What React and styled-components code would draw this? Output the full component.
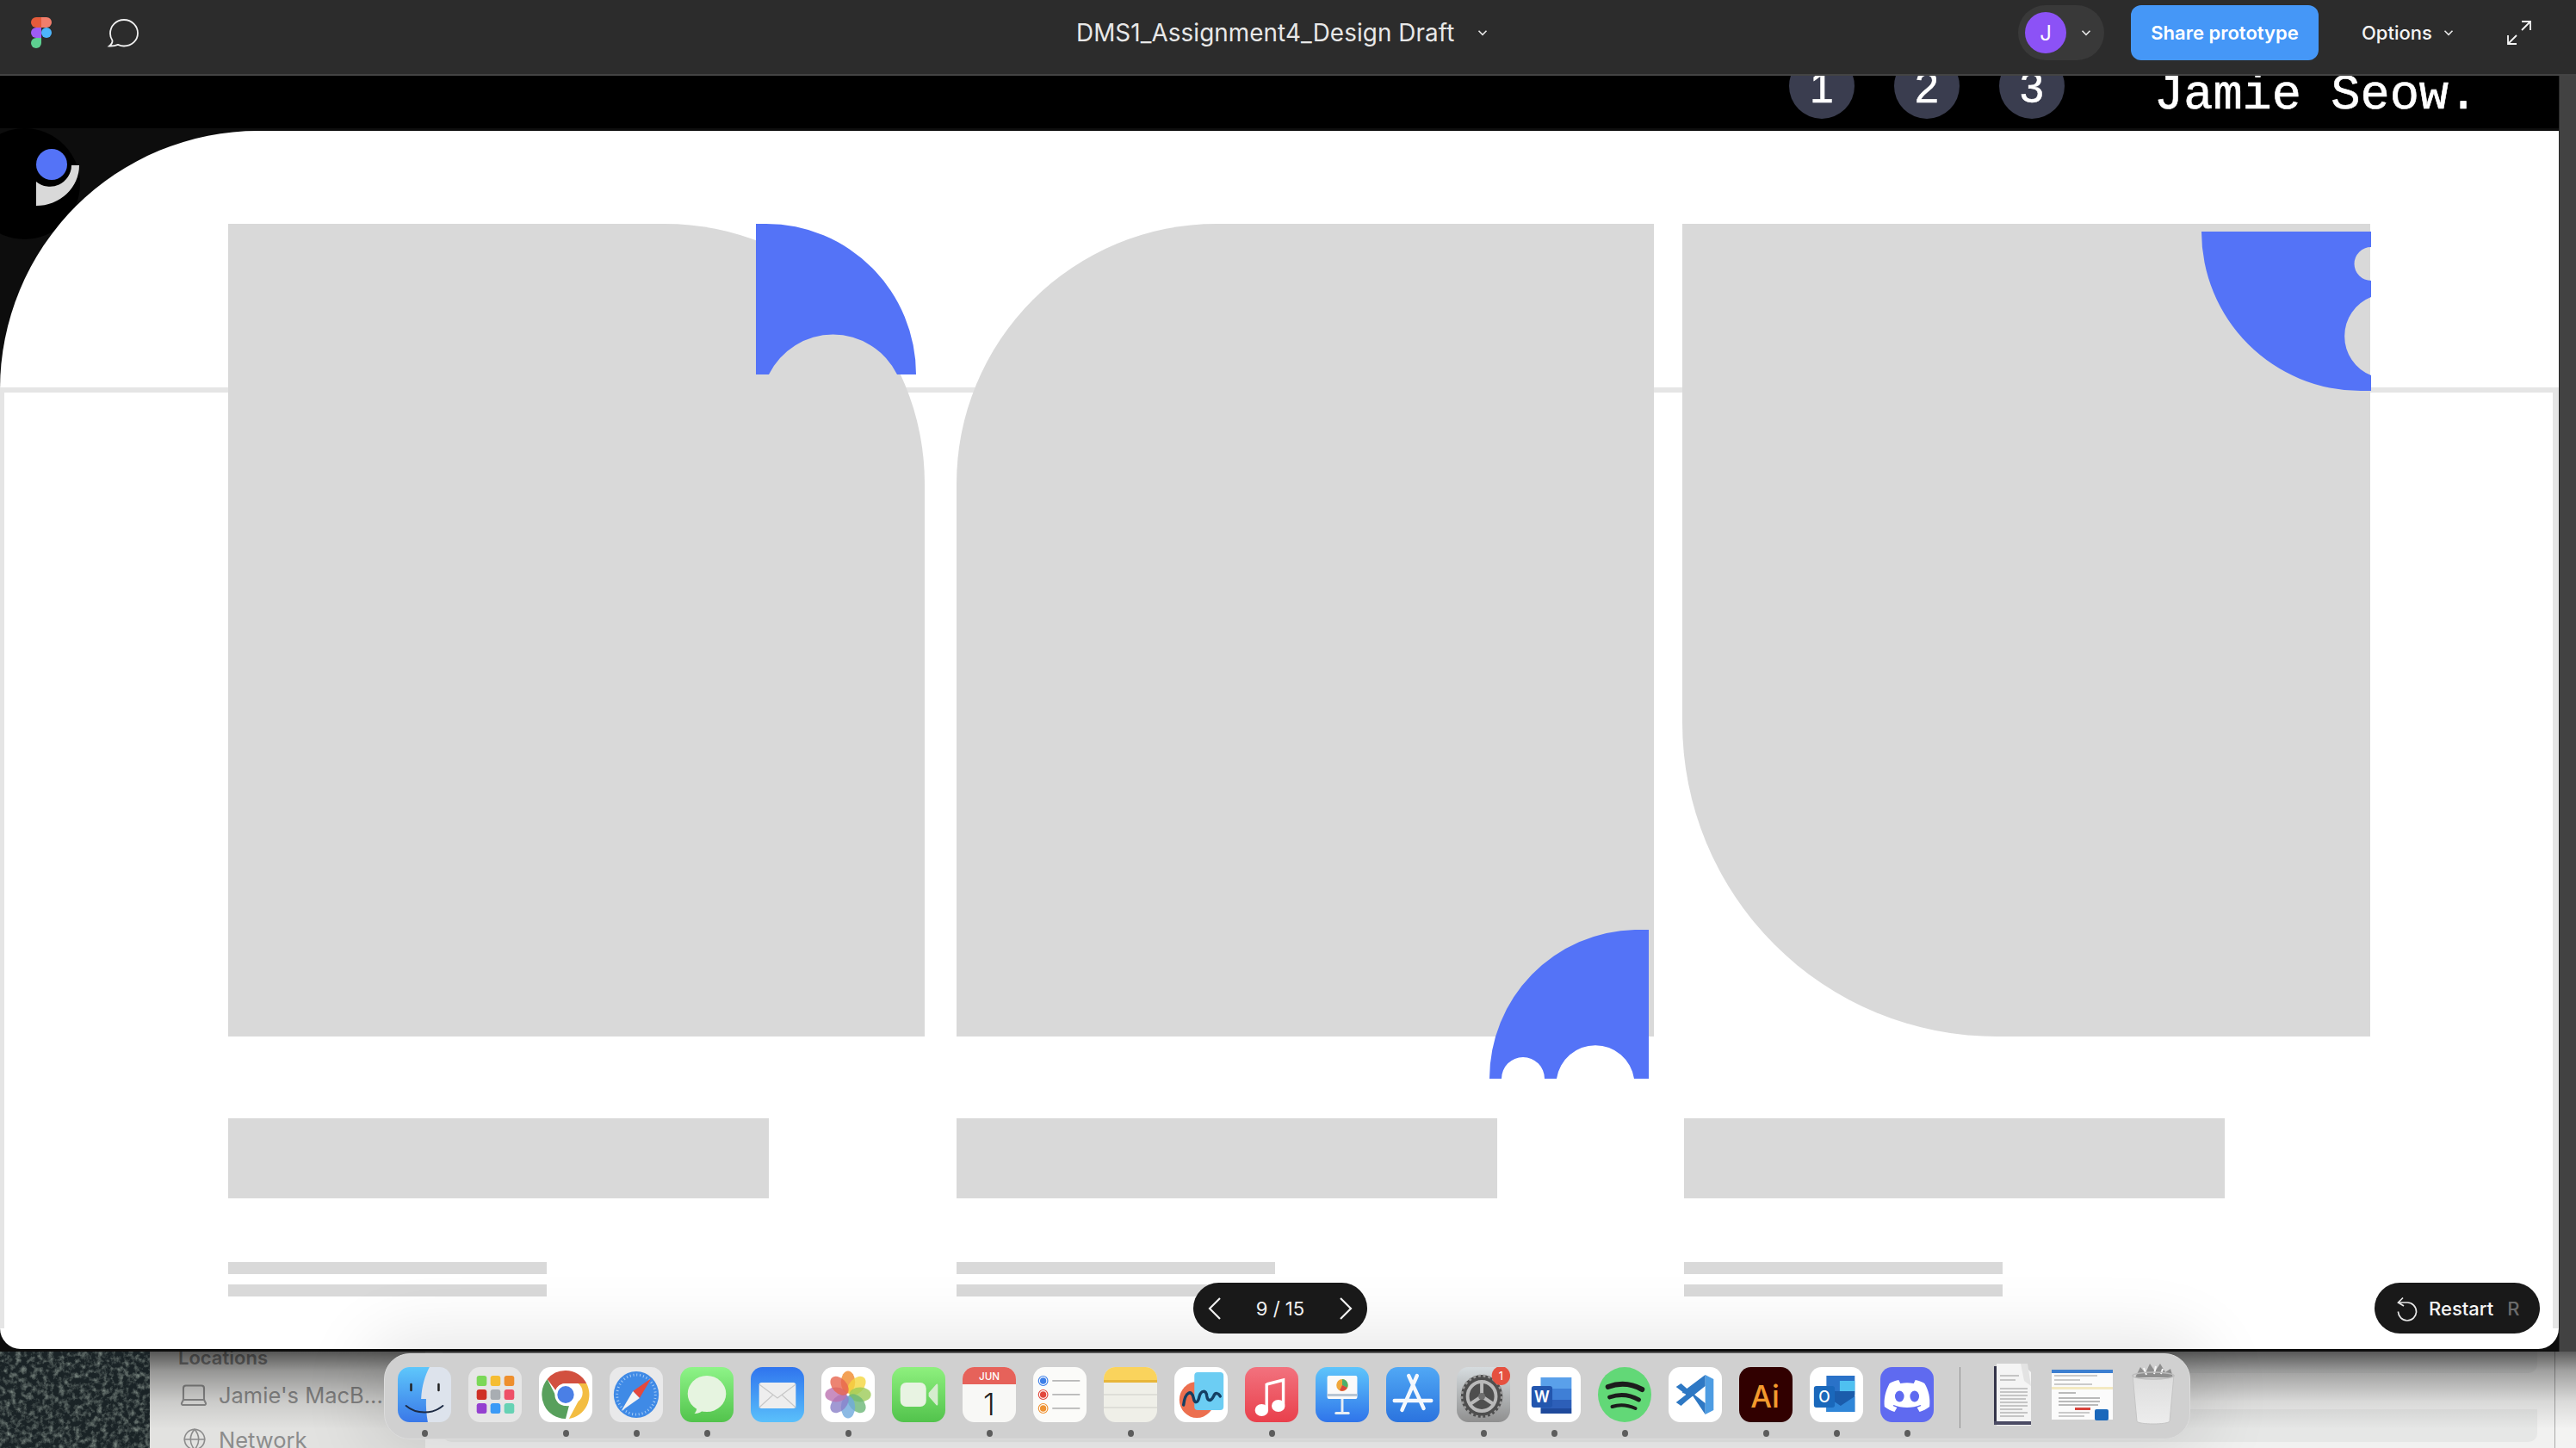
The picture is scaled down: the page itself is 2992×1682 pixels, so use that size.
import React from 'react'
import styled, { createGlobalStyle } from 'styled-components'
import { Laptop, Globe } from 'lucide-react'

const GlobalStyle = createGlobalStyle`
  html, body { margin: 0; padding: 0; background: #1c1c1c; }
  body { font-family: Inter, "Liberation Sans", sans-serif; }
`

const Screen = styled.div`
  position: relative;
  width: 2992px;
  height: 1682px;
  overflow: hidden;
  display: flex;
  flex-direction: column;
`

/* figma top bar */
const TopBar = styled.header`
  height: 88px;
  flex: none;
  box-sizing: border-box;
  padding-bottom: 10px;
  display: flex;
  align-items: center;
  background: #2c2c2c;
  border-bottom: 2px solid #444;
  color: #f0f0f0;
  position: relative;
  z-index: 2;
`
const LeftTools = styled.div`
  width: 1250px;
  flex: none;
  display: flex;
  align-items: center;
  gap: 64px;
  padding-left: 36px;
  box-sizing: border-box;
`
const Title = styled.div`
  display: flex;
  align-items: center;
  gap: 27px;
  font-size: 27.800px;
  color: #e8e8e8;
  letter-spacing: 0.1px;
`
const RightTools = styled.div`
  margin-left: auto;
  display: flex;
  align-items: center;
  padding-right: 52px;
`
const AvatarPill = styled.div`
  width: 100px;
  height: 64px;
  box-sizing: border-box;
  padding-left: 8px;
  border-radius: 32px;
  background: #393939;
  display: flex;
  align-items: center;
  gap: 17px;
`
const Avatar = styled.div`
  width: 48px;
  height: 48px;
  border-radius: 50%;
  background: #8c52f6;
  color: #fff;
  font-size: 24px;
  display: flex;
  align-items: center;
  justify-content: center;
`
const ShareButton = styled.button`
  width: 218px;
  height: 64px;
  margin-left: 31px;
  border: none;
  border-radius: 12px;
  background: #4597f7;
  color: #fff;
  font: 600 22px Inter, sans-serif;
  padding: 0;
`
const OptionsButton = styled.div`
  width: 107px;
  margin-left: 50px;
  display: flex;
  align-items: center;
  justify-content: space-between;
  font-size: 22px;
  font-weight: 500;
  color: #f4f4f4;
`
const ExpandIcon = styled.svg`
  width: 28px;
  height: 28px;
  margin-left: 62px;
`

/* prototype viewport */
const Stage = styled.div`
  flex: none;
  height: 1482px;
  padding-right: 19px;
  background: #424242;
  display: flex;
`
const Viewport = styled.main`
  position: relative;
  flex: 1;
  display: flex;
  flex-direction: column;
  background: #0d0d0d;
  border-right: 1px solid #2a2a2a;
`
const Band = styled.div`
  height: 61px;
  flex: none;
  box-sizing: border-box;
  background: #000;
  overflow: hidden;
  display: flex;
  align-items: flex-end;
  padding: 0 0 11px 2078px;
`
const StepDot = styled.div`
  width: 76px;
  height: 76px;
  flex: none;
  margin-right: 46px;
  border-radius: 50%;
  background: #3a3d4f;
  color: #fff;
  font: 400 50px/72px "Liberation Sans", sans-serif;
  -webkit-text-stroke: 0.5px #fff;
  display: flex;
  align-items: flex-end;
  justify-content: center;
`
const Brand = styled.div`
  margin-left: 58px;
  color: #fff;
  font: 400 57px/54px "Liberation Mono", monospace;
  white-space: nowrap;
  -webkit-text-stroke: 0.6px #fff;
`
const Canvas = styled.div`
  position: relative;
  flex: 1;
  display: flex;
  padding: 3px 0 3px;
`
const LogoDisc = styled.div`
  position: absolute;
  left: -36px;
  top: 0;
  width: 129px;
  height: 129px;
  border-radius: 50%;
  background: #000;
`
const LogoMark = styled.svg`
  position: absolute;
  left: 36px;
  top: 0;
  width: 100px;
  height: 129px;
`
const Sheet = styled.div`
  position: relative;
  flex: 1;
  box-sizing: border-box;
  background: #fff;
  border-radius: 300px 0 24px 24px;
  padding: 108px 0 0 265px;
  display: flex;
  align-items: flex-start;

  &::before {
    content: '';
    position: absolute;
    top: 298px;
    left: 0;
    right: 0;
    bottom: 24px;
    border: solid #e5e5e5;
    border-width: 6px 7px 0 5px;
  }
`
const Column = styled.section`
  position: relative;
  width: ${p => p.$width}px;
  margin-right: ${p => p.$gap}px;
  flex: none;
  display: flex;
  flex-direction: column;
`
const Art = styled.div`
  position: relative;
  height: 944px;
  background: #d9d9d9;
  border-radius: ${p => p.$radius};
`
const Corner = styled.svg`
  position: absolute;
  left: 0;
  top: 0;
  width: 100%;
  height: 100%;
  overflow: visible;
  fill: #5473f7;
`
const TitleBar = styled.div`
  width: 628px;
  height: 93px;
  margin: 95px 0 74px ${p => p.$inset || 0}px;
  background: #d9d9d9;
`
const TextLine = styled.div`
  width: 370px;
  height: 14px;
  margin: 0 0 12px ${p => p.$inset || 0}px;
  background: #d9d9d9;
`

/* player controls */
const PagerPill = styled.div`
  position: absolute;
  left: 1386px;
  top: 1490px;
  width: 202px;
  height: 59px;
  box-sizing: border-box;
  padding: 0 17px;
  border-radius: 30px;
  background: #191919;
  color: #f0f0f0;
  display: flex;
  align-items: center;
  justify-content: space-between;
  font-size: 22px;
  z-index: 4;
`
const RestartPill = styled.div`
  position: absolute;
  left: 2758px;
  top: 1490px;
  width: 192px;
  height: 59px;
  box-sizing: border-box;
  padding-left: 26px;
  border-radius: 30px;
  background: #191919;
  color: #f4f4f4;
  display: flex;
  align-items: center;
  font-size: 22px;
  font-weight: 500;
  z-index: 4;
`
const RestartIcon = styled.svg`
  width: 24px;
  height: 28px;
  margin-right: 13px;
  overflow: visible;
`
const RestartKey = styled.span`
  margin-left: 16px;
  color: #6b6b6b;
`

/* mac desktop under the window */
const Desktop = styled.div`
  position: relative;
  flex: 1;
  display: flex;
  overflow: hidden;
  background: #eee;

  &::after {
    content: '';
    position: absolute;
    inset: 0;
    background: linear-gradient(rgba(0,0,0,.62) 0, rgba(0,0,0,.34) 22px, rgba(0,0,0,.1) 58px, rgba(0,0,0,0) 90px);
    pointer-events: none;
  }
`
const Wallpaper = styled.svg`
  width: 174px;
  height: 112px;
  flex: none;
  position: relative;
  z-index: 1;
`
const Sidebar = styled.div`
  width: 320px;
  flex: none;
  box-sizing: border-box;
  padding-left: 33px;
  background: #e2e2e0;
  color: #8c8c8c;
`
const SidebarHead = styled.div`
  margin-top: -8px;
  height: 30px;
  font-size: 22px;
  line-height: 30px;
  font-weight: 600;
  color: #8a8a8a;
`
const SidebarRow = styled.div`
  height: 52px;
  margin-top: ${p => p.$top || 0}px;
  padding-left: ${p => p.$inset || 0}px;
  display: flex;
  align-items: center;
  gap: ${p => p.$gap}px;
  font-size: 25.500px;
  white-space: nowrap;
`
const MainPane = styled.div`
  flex: 1;
  box-sizing: border-box;
  padding: 0 20px;
  background: #f1f1f0;
  display: flex;
  flex-direction: column;
  gap: 42px;
`
const PaneRow = styled.div`
  height: ${p => p.$height}px;
  flex: none;
  border-radius: 0 0 10px 10px;
  background: #e6e7e6;
`
const SidePane = styled.div`
  width: 24px;
  flex: none;
  background: #f3f3f2;
  border-left: 1px solid #a9a9a9;
`

/* dock */
const Dock = styled.nav`
  position: absolute;
  left: 446px;
  top: 1572px;
  width: 2098px;
  height: 100px;
  box-sizing: border-box;
  padding: 15px 0 0 15px;
  display: flex;
  align-items: flex-start;
  gap: 20px;
  border-radius: 30px;
  background: #d0d0d0;
  border: 1px solid #dcdcdc;
  box-shadow: 0 0 80px 20px rgba(0, 0, 0, .1);
  z-index: 3;
`
const DockItem = styled.div`
  width: ${p => p.$width || 62}px;
  flex: none;
  margin-left: ${p => p.$left || 0}px;
  margin-top: ${p => p.$top || 0}px;
  display: flex;
  flex-direction: column;
  align-items: center;
`
const DockIcon = styled.svg`
  width: 100%;
  height: ${p => p.$height || 64}px;
  display: block;
`
const RunDot = styled.div`
  width: 7px;
  height: 8px;
  margin-top: 9px;
  border-radius: 50%;
  background: ${p => (p.$on ? '#5c5c5c' : 'transparent')};
`
const DockDivider = styled.div`
  width: 1px;
  height: 71px;
  flex: none;
  margin: 0 16px 0 10px;
  background: #8f8f8f;
`

const Chevron = ({ size = 12 }) => (
  <svg width={size} height={size} viewBox="0 0 12 12" fill="none" stroke="#e8e8e8" strokeWidth="1.6">
    <path d="M1.5 3.8 6 8.3l4.5-4.5" />
  </svg>
)

const FigmaLogo = () => (
  <svg width="24" height="36" viewBox="0 0 24 36">
    <path d="M12 0H6a6 6 0 0 0 0 12h6z" fill="#e55b3b" />
    <path d="M12 0h6a6 6 0 0 1 0 12h-6z" fill="#f27e6c" />
    <path d="M12 12H6a6 6 0 0 0 0 12h6z" fill="#9f5cf5" />
    <circle cx="18" cy="18" r="6" fill="#4db5fb" />
    <path d="M6 24h6v6a6 6 0 1 1-6-6z" fill="#5dcf90" />
  </svg>
)

const CommentIcon = () => (
  <svg width="38" height="36" viewBox="0 0 38 36" fill="none" stroke="#f0f0f0" strokeWidth="1.8">
    <path d="M3 33.5c2.5-2 3.8-4 3.5-6.5C4.800 24.500 4 22 4 19 4 10.200 11 3 20 3s16 7 16 15.500S29 33.500 20 33.500c-3 0-4.800-.6-7-1.600-3 1.300-6 1.700-10 1.600z" />
  </svg>
)

const FinderIcon = () => (
  <>
    <defs>
      <linearGradient id="finderA" x1="0" y1="0" x2="0" y2="1">
        <stop offset="0" stopColor="#5ec7fb" />
        <stop offset="1" stopColor="#3a78e8" />
      </linearGradient>
    </defs>
    <rect width="64" height="64" rx="14" fill="#dde3ec" />
    <path d="M14 0h24c-5 10-9 20-10 37h6c-.4 9 .4 18 2 27H14A14 14 0 0 1 0 50V14A14 14 0 0 1 14 0z" fill="url(#finderA)" />
    <path d="M16 20v7M49 20v7" stroke="#222" strokeWidth="2.600" strokeLinecap="round" />
    <path d="M10 45c12 10 32 10 44 0" fill="none" stroke="#1d2b44" strokeWidth="2" strokeLinecap="round" />
  </>
)

const LaunchIcon = () => {
  const colors = ['#7bd858', '#f5bd32', '#ee8f2e', '#cf3126', '#a8adb2', '#ee5068', '#9440d0', '#3b9af6', '#66d2b4']
  return (
    <>
      <rect width="64" height="64" rx="14" fill="#e6e6e6" />
      {colors.map((c, i) => (
        <rect key={c} x={10 + (i % 3) * 16.500} y={10 + Math.floor(i / 3) * 16} width="12" height="12" rx="2.500" fill={c} />
      ))}
    </>
  )
}

const ChromeIcon = () => (
  <>
    <rect width="64" height="64" rx="14" fill="#fff" />
    <path d="M32 4a28 28 0 0 1 25 15H32a13 13 0 0 0-12 8L10 14A28 28 0 0 1 32 4z" fill="#d2503f" />
    <path d="M57 19a28 28 0 0 1-21 41l11-20a13 13 0 0 0 0-21z" fill="#f3bd42" />
    <path d="M10 14l12 23a13 13 0 0 0 14 8L32 60A28 28 0 0 1 10 14z" fill="#58a05c" />
    <circle cx="32" cy="32" r="13" fill="#fff" />
    <circle cx="32" cy="32" r="10" fill="#4a7fe6" />
  </>
)

const SafariIcon = () => (
  <>
    <rect width="64" height="64" rx="14" fill="#e9e9ea" />
    <circle cx="32" cy="32" r="27" fill="#3f8ae6" />
    <circle cx="32" cy="32" r="23" fill="none" stroke="#a9cdf5" strokeWidth="3" strokeDasharray="1 3" />
    <path d="M50 13 36 36 28 28z" fill="#e5483d" />
    <path d="M14 51 28 28 36 36z" fill="#f3f3f3" />
  </>
)

const MessagesIcon = () => (
  <>
    <defs>
      <linearGradient id="msgA" x1="0" y1="0" x2="0" y2="1">
        <stop offset="0" stopColor="#8ef488" />
        <stop offset="1" stopColor="#52c34c" />
      </linearGradient>
    </defs>
    <rect width="64" height="64" rx="14" fill="url(#msgA)" />
    <ellipse cx="32" cy="31" rx="23" ry="21" fill="#e6f4e0" />
    <path d="M20 46c0 4-1 6-3 8 5 0 9-2 12-5z" fill="#e6f4e0" />
  </>
)

const MailIcon = () => (
  <>
    <defs>
      <linearGradient id="mailA" x1="0" y1="0" x2="0" y2="1">
        <stop offset="0" stopColor="#2f74ee" />
        <stop offset="1" stopColor="#5ac0fb" />
      </linearGradient>
    </defs>
    <rect width="64" height="64" rx="14" fill="url(#mailA)" />
    <rect x="10" y="18" width="44" height="30" rx="3" fill="#eeeeee" />
    <path d="M10 20l22 16 22-16M10 47l17-15M54 47 37 32" fill="none" stroke="#c7c7c7" strokeWidth="1.200" />
  </>
)

const PhotosIcon = () => {
  const petals = ['#f08a2c', '#f4d63f', '#9ccb58', '#6cb777', '#6fa9dd', '#8a7fc8', '#bb72b0', '#e7654f']
  return (
    <>
      <rect width="64" height="64" rx="14" fill="#fff" />
      {petals.map((c, i) => (
        <ellipse key={c} cx="32" cy="17.500" rx="8.500" ry="13" fill={c} opacity=".8" transform={`rotate(${i * 45} 32 32)`} />
      ))}
    </>
  )
}

const FaceTimeIcon = () => (
  <>
    <defs>
      <linearGradient id="ftA" x1="0" y1="0" x2="0" y2="1">
        <stop offset="0" stopColor="#8ef07e" />
        <stop offset="1" stopColor="#52c34c" />
      </linearGradient>
    </defs>
    <rect width="64" height="64" rx="14" fill="url(#ftA)" />
    <rect x="10" y="18" width="31" height="28" rx="7" fill="#e8f3e2" />
    <path d="M44 30l9-10c1-1 2-.5 2 1v22c0 1.500-1 2-2 1l-9-10z" fill="#d5ecce" />
  </>
)

const CalendarIcon = () => (
  <>
    <rect width="64" height="64" rx="14" fill="#f8f8f6" />
    <path d="M14 0h36a14 14 0 0 1 14 14v6H0v-6A14 14 0 0 1 14 0z" fill="#e6625a" />
    <text x="32" y="15" textAnchor="middle" fontFamily="Inter, sans-serif" fontSize="12" fontWeight="500" fill="#fff">JUN</text>
    <text x="32" y="56" textAnchor="middle" fontFamily="Inter, sans-serif" fontSize="36" fontWeight="300" fill="#222">1</text>
  </>
)

const RemindersIcon = () => {
  const rows = [['#3d7fe8', 16], ['#e2483d', 32], ['#ee9232', 48]]
  return (
    <>
      <rect width="64" height="64" rx="14" fill="#fbfbf9" />
      {rows.map(([c, y]) => (
        <g key={c}>
          <circle cx="12" cy={y} r="5.500" fill="#fff" stroke={c} strokeWidth="1.200" />
          <circle cx="12" cy={y} r="3.800" fill={c} />
          <rect x="23" y={y - 1} width="33" height="1.800" fill="#b9b9b9" />
        </g>
      ))}
    </>
  )
}

const NotesIcon = () => (
  <>
    <rect width="64" height="64" rx="14" fill="#efefe8" />
    <path d="M14 0h36a14 14 0 0 1 14 14v3H0v-3A14 14 0 0 1 14 0z" fill="#fad35c" />
    <rect y="15" width="64" height="3" fill="#e8b639" />
    <path d="M0 32h64M0 47h64" stroke="#d9d9d2" strokeWidth="1.500" />
  </>
)

const FreeformIcon = () => (
  <>
    <rect width="64" height="64" rx="14" fill="#fff" />
    <circle cx="27" cy="38" r="21" fill="#ec6f4f" />
    <rect x="24" y="6" width="35" height="44" rx="4" fill="#6ccdf3" />
    <path d="M11 44c2-16 10-18 12-8 1 6 5 7 7-2 2-7 8-8 9 0 1 6 5 6 8 0 2-5 6-4 8 0" fill="none" stroke="#143f63" strokeWidth="3.500" strokeLinecap="round" />
  </>
)

const MusicIcon = () => (
  <>
    <defs>
      <linearGradient id="musicA" x1="0" y1="0" x2="0" y2="1">
        <stop offset="0" stopColor="#f2727e" />
        <stop offset="1" stopColor="#e9404c" />
      </linearGradient>
    </defs>
    <rect width="64" height="64" rx="14" fill="url(#musicA)" />
    <path d="M26 20 46 15V44" fill="none" stroke="#fff" strokeWidth="3.500" />
    <path d="M26 19v30" stroke="#fff" strokeWidth="3.500" />
    <ellipse cx="20" cy="50" rx="8" ry="7" fill="#fff" />
    <ellipse cx="40" cy="45" rx="8" ry="7" fill="#fff" />
  </>
)

const KeynoteIcon = () => (
  <>
    <defs>
      <linearGradient id="keyA" x1="0" y1="0" x2="0" y2="1">
        <stop offset="0" stopColor="#5ec5fb" />
        <stop offset="1" stopColor="#2f74ea" />
      </linearGradient>
    </defs>
    <rect width="64" height="64" rx="14" fill="url(#keyA)" />
    <rect x="14" y="10" width="36" height="27" rx="2" fill="#fafafa" />
    <rect x="14" y="31" width="36" height="3" fill="#b8c6d4" />
    <circle cx="32" cy="21" r="7" fill="#f0a73a" />
    <path d="M32 21V14a7 7 0 0 1 6 10z" fill="#4caf6c" />
    <path d="M32 21l6 3a7 7 0 0 1-9 3z" fill="#d8473f" />
    <rect x="30.500" y="37" width="3" height="16" fill="#e8eef4" />
    <rect x="23" y="52" width="18" height="3" rx="1.500" fill="#e8eef4" />
  </>
)

const AppStoreIcon = () => (
  <>
    <defs>
      <linearGradient id="appA" x1="0" y1="0" x2="0" y2="1">
        <stop offset="0" stopColor="#50a8f5" />
        <stop offset="1" stopColor="#2b73de" />
      </linearGradient>
    </defs>
    <rect width="64" height="64" rx="14" fill="url(#appA)" />
    <path d="M37 10 19 50M27 10l18 38M10 39h44" fill="none" stroke="#f4f8fd" strokeWidth="4.500" strokeLinecap="round" />
  </>
)

const SettingsIcon = () => (
  <>
    <defs>
      <linearGradient id="setA" x1="0" y1="0" x2="0" y2="1">
        <stop offset="0" stopColor="#d6dcdf" />
        <stop offset="1" stopColor="#8f8f8f" />
      </linearGradient>
    </defs>
    <rect width="64" height="64" rx="14" fill="url(#setA)" />
    <circle cx="30" cy="34" r="25" fill="#4e4e4e" />
    <circle cx="30" cy="34" r="24" fill="none" stroke="#9a9a9a" strokeWidth="3" strokeDasharray="3 3" />
    <circle cx="30" cy="34" r="17" fill="none" stroke="#b9b9b9" strokeWidth="4" />
    <path d="M30 34V18M30 34 16 43M30 34l14 9" stroke="#b9b9b9" strokeWidth="4" />
    <circle cx="30" cy="34" r="4" fill="#6f6f6f" />
    <circle cx="53" cy="10" r="11" fill="#e5503f" />
    <text x="53" y="15" textAnchor="middle" fontFamily="Inter, sans-serif" fontSize="13" fill="#fff">1</text>
  </>
)

const WordIcon = () => (
  <>
    <rect width="64" height="64" rx="14" fill="#fff" />
    <rect x="16" y="12" width="37" height="13" fill="#5aa0ea" />
    <rect x="16" y="25" width="37" height="13" fill="#3f7fd6" />
    <rect x="16" y="38" width="37" height="10" fill="#2d5fb8" />
    <rect x="16" y="48" width="37" height="6" fill="#1f4a9c" />
    <rect x="5" y="22" width="25" height="25" rx="3" fill="#2356ae" />
    <text x="17.500" y="41" textAnchor="middle" fontFamily="Inter, sans-serif" fontSize="18" fontWeight="600" fill="#fff">W</text>
  </>
)

const SpotifyIcon = () => (
  <>
    <ellipse cx="32" cy="32" rx="32" ry="32" fill="#62d877" />
    <path d="M12 23c14-5 28-4 41 3" fill="none" stroke="#1c1c1c" strokeWidth="6" strokeLinecap="round" />
    <path d="M14 35c12-4 24-3 35 3" fill="none" stroke="#1c1c1c" strokeWidth="5" strokeLinecap="round" />
    <path d="M17 46c9-3 19-2 28 2" fill="none" stroke="#1c1c1c" strokeWidth="4" strokeLinecap="round" />
  </>
)

const VSCodeIcon = () => (
  <>
    <rect width="64" height="64" rx="14" fill="#fff" />
    <path d="M44 9 54 14v36l-10 5z" fill="#4d9ce2" />
    <path d="M44 9v13L22 39l-7 6-6-4 12-9L9 23l6-4 7 6z" fill="#2e78c4" />
    <path d="M44 55V42L22 25l-6 5 12 2z" fill="#2e78c4" />
  </>
)

const IllustratorIcon = () => (
  <>
    <rect width="64" height="64" rx="14" fill="#310000" />
    <text x="31" y="47" textAnchor="middle" fontFamily="Inter, sans-serif" fontSize="36" fontWeight="500" fill="#f39a2d">Ai</text>
  </>
)

const OutlookIcon = () => (
  <>
    <rect width="64" height="64" rx="14" fill="#fff" />
    <rect x="20" y="10" width="34" height="18" fill="#2a72c8" />
    <rect x="36" y="16" width="18" height="16" fill="#4fc0f0" />
    <rect x="20" y="28" width="34" height="24" fill="#1b5cab" />
    <path d="M20 34l17 11 17-11v18H20z" fill="#2f86d8" />
    <rect x="5" y="22" width="25" height="25" rx="3" fill="#1a68bb" />
    <text x="17.500" y="41" textAnchor="middle" fontFamily="Inter, sans-serif" fontSize="18" fontWeight="500" fill="#fff">O</text>
  </>
)

const DiscordIcon = () => (
  <>
    <rect width="64" height="64" rx="14" fill="#5f6af0" />
    <path d="M22 15c-5 1-8 2-11 4-5 9-7 18-6 27 4 3 8 5 12 6l3-5-5-2 1-1c9 4 23 4 32 0l1 1-5 2 3 5c4-1 8-3 12-6 1-10-1-19-6-27-3-2-6-3-11-4l-2 4c-6-1-10-1-16 0z" fill="#fff" />
    <ellipse cx="23" cy="34" rx="5.500" ry="6.500" fill="#5f6af0" />
    <ellipse cx="41" cy="34" rx="5.500" ry="6.500" fill="#5f6af0" />
  </>
)

const PaperThumb = () => (
  <>
    <path d="M6 1h30l10 10v62H6z" fill="#f4f4f4" />
    <path d="M3 4h3v68H3z" fill="#35354a" />
    <rect x="3" y="68" width="43" height="4" fill="#4a4a63" />
    <path d="M34 1h8l4 26-8-6z" fill="#e3e3e3" />
    <path d="M10 15h22M10 20h18M10 30h32M10 34h32M10 38h32M10 42h30M10 46h32M10 50h32M10 54h26M10 58h32M10 62h28" stroke="#b5b5b5" strokeWidth="1.500" />
  </>
)

const MailThumb = () => (
  <>
    <rect y="3" width="71" height="58" fill="#fbfbfb" />
    <rect y="3" width="71" height="4" fill="#3d7fd0" />
    <path d="M3 10h50M3 15h30M3 20h44" stroke="#9a9a9a" strokeWidth="1.200" />
    <rect y="23" width="71" height="3" fill="#f3e9c2" />
    <path d="M8 30h20M8 36h48M8 40h48M8 44h46" stroke="#7a7a7a" strokeWidth="1.200" />
    <rect x="27" y="47" width="18" height="3" fill="#d8413a" />
    <rect x="50" y="49" width="16" height="13" rx="2" fill="#1a68bb" />
    <path d="M8 53h36M8 57h30" stroke="#9a9a9a" strokeWidth="1.200" />
  </>
)

const TrashThumb = () => (
  <>
    <defs>
      <linearGradient id="binA" x1="0" y1="0" x2="0" y2="1">
        <stop offset="0" stopColor="#dcdcdc" />
        <stop offset="1" stopColor="#ededed" />
      </linearGradient>
    </defs>
    <path d="M3 14h48l-5 54c-2 4-36 4-38 0z" fill="url(#binA)" stroke="#c5c5c5" />
    <path d="M6 17 12 5l6 7 5-11 6 9 6-9 6 10 6-4 3 10z" fill="#8e8e8e" />
    <path d="M16 6l3 8M30 4l-2 9M38 7l-2 6" stroke="#f6f6f6" strokeWidth="2" />
    <ellipse cx="27" cy="15" rx="24" ry="4" fill="none" stroke="#bdbdbd" strokeWidth="1.500" />
  </>
)

const apps = [
  [FinderIcon, true], [LaunchIcon, false], [ChromeIcon, true], [SafariIcon, true],
  [MessagesIcon, true], [MailIcon, false], [PhotosIcon, true], [FaceTimeIcon, false],
  [CalendarIcon, true], [RemindersIcon, false], [NotesIcon, true], [FreeformIcon, false],
  [MusicIcon, true], [KeynoteIcon, false], [AppStoreIcon, false], [SettingsIcon, true],
  [WordIcon, true], [SpotifyIcon, true], [VSCodeIcon, false], [IllustratorIcon, true],
  [OutlookIcon, true], [DiscordIcon, true],
]

const App = () => {
  return (
    <>
      <GlobalStyle />
      <Screen>
        <TopBar>
          <LeftTools>
            <FigmaLogo />
            <CommentIcon />
          </LeftTools>
          <Title>
            DMS1_Assignment4_Design Draft
            <Chevron />
          </Title>
          <RightTools>
            <AvatarPill>
              <Avatar>J</Avatar>
              <Chevron />
            </AvatarPill>
            <ShareButton>Share prototype</ShareButton>
            <OptionsButton>
              Options
              <Chevron />
            </OptionsButton>
            <ExpandIcon viewBox="0 0 28 28" fill="none" stroke="#f4f4f4" strokeWidth="1.800">
              <path d="M17 1h10v10M27 1 17 11M11 27H1V17M1 27l10-10" />
            </ExpandIcon>
          </RightTools>
        </TopBar>

        <Stage>
          <Viewport>
            <Band>
              <StepDot>1</StepDot>
              <StepDot>2</StepDot>
              <StepDot>3</StepDot>
              <Brand>Jamie Seow.</Brand>
            </Band>
            <Canvas>
              <LogoDisc>
                <LogoMark viewBox="0 0 100 129">
                  <circle cx="60" cy="42" r="18" fill="#5473f7" />
                  <path d="M92 43A50 47 0 0 1 42 90V62A25 25 0 0 0 83 43z" fill="#d9d9d9" />
                </LogoMark>
              </LogoDisc>
              <Sheet>
                <Column $width={809} $gap={37}>
                  <Art $radius="0 302px 0 0">
                    <Corner viewBox="0 0 809 944">
                      <path d="M613 0h12a174 175 0 0 1 174 175h-22a83 83 0 0 0-149 0h-15z" />
                    </Corner>
                  </Art>
                  <TitleBar />
                  <TextLine />
                  <TextLine />
                </Column>
                <Column $width={810} $gap={33}>
                  <Art $radius="302px 0 0 0">
                    <Corner viewBox="0 0 810 944">
                      <path d="M619 993a173 173 0 0 1 169-173h16v173h-17a45.500 45.500 0 0 0-90 0h-14a25 25 0 0 0-50 0z" />
                    </Corner>
                  </Art>
                  <TitleBar />
                  <TextLine />
                  <TextLine />
                </Column>
                <Column $width={799} $gap={0}>
                  <Art $radius="0 0 0 365px">
                    <Corner viewBox="0 0 799 944">
                      <path d="M603 9h197v18a19.500 19.500 0 0 0 0 39v19a49 49 0 0 0 0 91v18h-12A185 185 0 0 1 603 9z" />
                    </Corner>
                  </Art>
                  <TitleBar $inset={2} />
                  <TextLine $inset={2} />
                  <TextLine $inset={2} />
                </Column>
              </Sheet>
            </Canvas>
          </Viewport>
        </Stage>

        <Desktop>
          <Wallpaper viewBox="0 0 174 112">
            <defs>
              <filter id="moss" x="0" y="0" width="100%" height="100%">
                <feTurbulence type="fractalNoise" baseFrequency="0.16" numOctaves="4" seed="4" />
                <feColorMatrix values="0 0 0 0 0.3  0 0 0 0 0.36  0 0 0 0 0.32  1.7 0 0 0 -0.72" />
              </filter>
            </defs>
            <rect width="174" height="112" fill="#1a2326" />
            <rect width="174" height="112" filter="url(#moss)" />
          </Wallpaper>
          <Sidebar>
            <SidebarHead>Locations</SidebarHead>
            <SidebarRow $top={2} $gap={11}>
              <Laptop size={36} strokeWidth={1.400} />
              Jamie&apos;s MacB...
            </SidebarRow>
            <SidebarRow $gap={14} $inset={5}>
              <Globe size={28} strokeWidth={1.400} />
              Network
            </SidebarRow>
          </Sidebar>
          <MainPane>
            <PaneRow $height={25} />
            <PaneRow $height={38} />
          </MainPane>
          <SidePane />
        </Desktop>

        <PagerPill>
          <svg width="16" height="28" viewBox="0 0 16 28" fill="none" stroke="#f0f0f0" strokeWidth="2.200">
            <path d="M14 2 2 14l12 12" />
          </svg>
          9 / 15
          <svg width="16" height="28" viewBox="0 0 16 28" fill="none" stroke="#f0f0f0" strokeWidth="2.200">
            <path d="M2 2l12 12L2 26" />
          </svg>
        </PagerPill>

        <RestartPill>
          <RestartIcon viewBox="0 0 24 28" fill="none" stroke="#e8e8e8" strokeWidth="1.700">
            <path d="M7 1.500 1.500 7l6.500 4" />
            <path d="M1.500 7H12a10.500 10.500 0 1 1-10.500 10.500" />
          </RestartIcon>
          Restart
          <RestartKey>R</RestartKey>
        </RestartPill>

        <Dock>
          {apps.map(([Icon, running], i) => (
            <DockItem key={i}>
              <DockIcon viewBox="0 0 64 64" preserveAspectRatio="none"><Icon /></DockIcon>
              <RunDot $on={running} />
            </DockItem>
          ))}
          <DockDivider />
          <DockItem $width={47} $top={-5}>
            <DockIcon $height={73} viewBox="0 0 47 73" preserveAspectRatio="none"><PaperThumb /></DockIcon>
          </DockItem>
          <DockItem $width={71} $left={3}>
            <DockIcon viewBox="0 0 71 64" preserveAspectRatio="none"><MailThumb /></DockIcon>
          </DockItem>
          <DockItem $width={54} $top={-5}>
            <DockIcon $height={73} viewBox="0 0 54 73" preserveAspectRatio="none"><TrashThumb /></DockIcon>
          </DockItem>
        </Dock>
      </Screen>
    </>
  )
}

export default App
